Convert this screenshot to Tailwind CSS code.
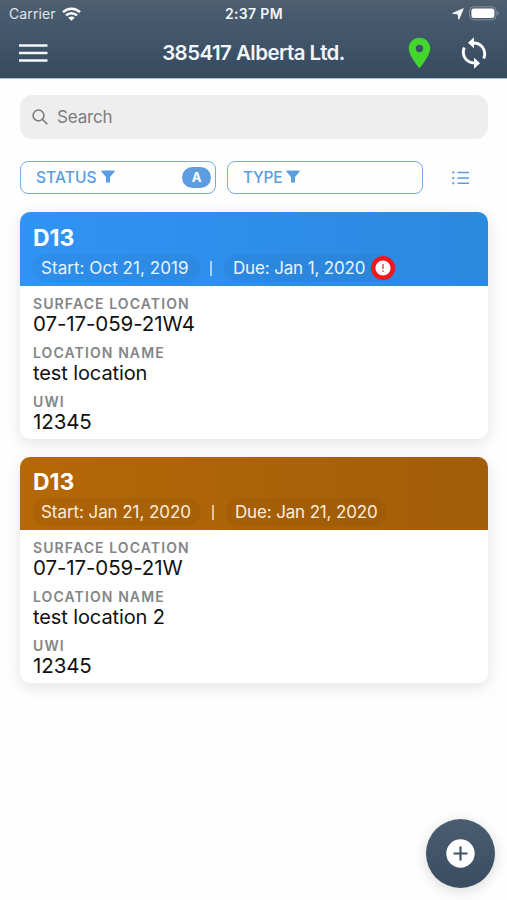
<!DOCTYPE html>
<html lang="en">
<head>
<meta charset="utf-8">
<title>385417 Alberta Ltd.</title>
<script src="https://cdn.jsdelivr.net/npm/@tailwindcss/browser@4"></script>
</head>
<body class="font-['Inter',sans-serif] bg-[#fefefe]">
<div class="relative w-[507px] h-[900px] overflow-hidden whitespace-nowrap">
  <header class="h-[78px] bg-linear-to-b from-[#4d5f71] to-[#364a60] text-[#f1f6fb]">
    <div class="grid grid-cols-3 items-center h-[27px] pl-[9px] pr-[8px] text-[14px]">
      <div class="flex items-center gap-[6px] text-[#dfe6ec]">
        <span class="tracking-[0.1px]">Carrier</span>
        <svg class="w-[19px] h-[14px]" viewBox="0 0 19 14" fill="none" stroke="#fff" stroke-width="2.5"><path d="M1 5.2a12.2 12.2 0 0 1 17 0M4 8.4a7.9 7.9 0 0 1 11 0"/><path d="M9.500 13.800L6.300 10.700a4.600 4.600 0 0 1 6.400 0z" fill="#fff" stroke="none"/></svg>
      </div>
      <span class="text-center font-semibold tracking-[0.35px]">2:37 PM</span>
      <div class="flex items-center justify-end gap-[5px]">
        <svg class="w-[12px] h-[12px]" viewBox="0 0 12 12" fill="#fff" stroke="#fff" stroke-width=".8" stroke-linejoin="round"><path d="M11.300.7L6.800 11.300 6.100 6.100.7 5.300z"/></svg>
        <svg class="w-[30px] h-[15px]" viewBox="0 0 30 15"><rect x=".6" y=".8" width="26.500" height="13" rx="4" fill="none" stroke="#7f8f9e"/><rect x="2.400" y="2.500" width="23" height="9.600" rx="2.300" fill="#fff"/><path d="M28.200 5v4.600q1.500-.6 1.500-2.300T28.200 5z" fill="#7f8f9e"/></svg>
      </div>
    </div>
    <div class="grid grid-cols-[144px_1fr_144px] items-center h-[52px]">
      <svg class="ml-[19px] w-[29px] h-[19px]" viewBox="0 0 29 19" stroke="#f4f8fb" stroke-width="2.500"><path d="M0 1.500h28.500M0 9h28.500M0 16.500h28.500"/></svg>
      <h1 class="text-center text-[20.5px] font-semibold tracking-[-0.55px]">385417 Alberta Ltd.</h1>
      <div class="flex items-center">
        <svg class="ml-[45px] w-[23px] h-[32px]" viewBox="0 0 23 32" fill="#43d62e"><path fill-rule="evenodd" d="M11.500.8C5.500.8.800 5.500.800 11.500c0 7.300 10.700 19.700 10.700 19.700s10.700-12.400 10.700-19.700C22.200 5.500 17.500.8 11.500.8zm0 7a3.700 3.700 0 1 1 0 7.400 3.700 3.700 0 0 1 0-7.400z"/></svg>
        <svg class="ml-[30px] w-[26px] h-[34px]" viewBox="0 0 26 34" fill="none" stroke="#fff" stroke-width="2.900"><path d="M12.500 7C20.500 7 26 14.500 22.700 22.500M13.500 27C5.500 27 0 19.500 3.300 11.500"/><path d="M13 1.200v11L7 6.700zM13 21.800v11l6-5.500z" fill="#fff" stroke="none"/></svg>
      </div>
    </div>
  </header>
  <main class="border-t border-[#a9c0ce] px-[20px] pt-[16px]">
    <div class="flex items-center gap-[9px] h-[44px] w-[468px] rounded-[12px] bg-[#eeeeee] pl-[12px] text-[#7c7c7c] text-[17px]">
      <svg class="w-[16px] h-[16px]" viewBox="0 0 16 16" fill="none" stroke="#777" stroke-width="1.500"><circle cx="6.500" cy="6.500" r="5.400"/><path d="M10.500 10.500l4.800 4.800"/></svg>
      <span class="pt-[2px] tracking-[-0.15px]">Search</span>
    </div>
    <div class="flex items-center mt-[22px] text-[#5b9de0] text-[15.500px] font-medium">
      <div class="flex items-center w-[196px] h-[33px] border-[1.5px] border-[#74ace3] rounded-[8px] pl-[15px] pr-[4px]">
        <span class="tracking-[0.1px]">STATUS</span>
        <svg class="ml-[4px] mb-[3px] w-[14px] h-[13px]" viewBox="0 0 14 13" fill="#5b9de0"><path d="M.5.500h13v1.300L9 7v5.500H5V7L.5 1.800z"/></svg>
        <span class="ml-auto w-[29px] h-[21px] rounded-full bg-[#5b9de0] text-white text-[13px] font-bold flex items-center justify-center">A</span>
      </div>
      <div class="flex items-center ml-[11px] w-[196px] h-[33px] border-[1.5px] border-[#74ace3] rounded-[8px] pl-[15px]">
        <span class="tracking-[-0.3px]">TYPE</span>
        <svg class="ml-[4px] mb-[3px] w-[14px] h-[13px]" viewBox="0 0 14 13" fill="#5b9de0"><path d="M.5.500h13v1.300L9 7v5.500H5V7L.5 1.800z"/></svg>
      </div>
      <svg class="ml-[29px] w-[18px] h-[15px]" viewBox="0 0 18 15" stroke="#5b9de0" stroke-width="1.400"><path d="M5.500 2.500H17M5.500 8H17M5.500 13.300H17"/><path d="M.3 2.500h2M.3 8h2M.3 13.300h2" stroke-width="2"/></svg>
    </div>

    <article class="mt-[18px] w-[468px] h-[227px] rounded-[10px] overflow-hidden bg-white shadow-[0_4px_16px_rgba(0,0,0,0.11)]">
      <div class="h-[74px] bg-linear-to-r from-[#3094f5] to-[#2b89df] px-[12px] pt-[12px] text-white">
        <h2 class="pl-px text-[23px] leading-[28px] font-bold">D13</h2>
        <div class="flex items-center h-[28px] mt-[2px] text-[17px] text-[#e9f4ff]">
          <span class="flex items-center w-[168px] h-[28px] rounded-full bg-black/4 pl-[9px] pt-[2px] tracking-[0.05px]">Start: Oct 21, 2019</span>
          <span class="ml-[10px] w-[2px] h-[15px] bg-[#a9d2fa]"></span>
          <span class="relative flex items-center ml-[12px] w-[172px] h-[28px] rounded-full bg-black/4 pl-[9px] pt-[2px] tracking-[-0.15px]">Due: Jan 1, 2020
            <svg class="absolute right-[1px] top-[2px] w-[24px] h-[24px]" viewBox="0 0 24 24"><circle cx="12" cy="12" r="12" fill="#f5161c"/><circle cx="12" cy="12" r="7.600" fill="#fff"/><path d="M12 8v5M12 14.500v1.500" stroke="#e25a60" stroke-width="1.600"/></svg>
          </span>
        </div>
      </div>
      <dl class="px-[13px] pt-[9px]">
        <dt class="text-[14px] leading-[18px] font-semibold tracking-[1.1px] text-[#858585]">SURFACE LOCATION</dt>
        <dd class="text-[20.5px] leading-[22px] text-[#111] mb-[9px] tracking-[-0.1px]">07-17-059-21W4</dd>
        <dt class="text-[14px] leading-[18px] font-semibold tracking-[1.1px] text-[#858585]">LOCATION NAME</dt>
        <dd class="text-[20px] leading-[22px] text-[#111] mb-[9px] tracking-[-0.1px]">test location</dd>
        <dt class="text-[14px] leading-[18px] font-semibold tracking-[1.1px] text-[#858585]">UWI</dt>
        <dd class="text-[20.5px] leading-[22px] text-[#111] tracking-[-0.1px]">12345</dd>
      </dl>
    </article>

    <article class="mt-[18px] w-[468px] h-[226px] rounded-[10px] overflow-hidden bg-white shadow-[0_4px_16px_rgba(0,0,0,0.11)]">
      <div class="h-[73px] bg-linear-to-r from-[#b56807] to-[#a35d08] px-[12px] pt-[11px] text-white">
        <h2 class="pl-px text-[23px] leading-[28px] font-bold">D13</h2>
        <div class="flex items-center h-[28px] mt-[2px] text-[17px] text-[#fbeedd]">
          <span class="flex items-center w-[169px] h-[28px] rounded-full bg-black/4 pl-[9px] pt-[2px] tracking-[-0.07px]">Start: Jan 21, 2020</span>
          <span class="ml-[11px] w-[2px] h-[15px] bg-[#e3c39a]"></span>
          <span class="flex items-center ml-[12px] w-[161px] h-[28px] rounded-full bg-black/4 pl-[9px] pt-[2px] tracking-[-0.15px]">Due: Jan 21, 2020</span>
        </div>
      </div>
      <dl class="px-[13px] pt-[9px]">
        <dt class="text-[14px] leading-[18px] font-semibold tracking-[1.1px] text-[#858585]">SURFACE LOCATION</dt>
        <dd class="text-[20.5px] leading-[22px] text-[#111] mb-[9px] tracking-[-0.1px]">07-17-059-21W</dd>
        <dt class="text-[14px] leading-[18px] font-semibold tracking-[1.1px] text-[#858585]">LOCATION NAME</dt>
        <dd class="text-[20px] leading-[22px] text-[#111] mb-[9px] tracking-[-0.1px]">test location 2</dd>
        <dt class="text-[14px] leading-[18px] font-semibold tracking-[1.1px] text-[#858585]">UWI</dt>
        <dd class="text-[20.5px] leading-[22px] text-[#111] tracking-[-0.1px]">12345</dd>
      </dl>
    </article>
  </main>
  <button aria-label="Add" class="absolute left-[426px] top-[819px] w-[69px] h-[69px] rounded-full bg-linear-to-b from-[#4b5d70] to-[#384c62] shadow-[0_3px_14px_rgba(0,0,0,0.15)] flex items-center justify-center">
    <svg class="w-[29px] h-[29px]" viewBox="0 0 29 29"><circle cx="14.500" cy="14.500" r="14.200" fill="#fff"/><path d="M7.500 14.500h14M14.500 7.500v14" stroke="#3f5368" stroke-width="2.200"/></svg>
  </button>
</div>
</body>
</html>
